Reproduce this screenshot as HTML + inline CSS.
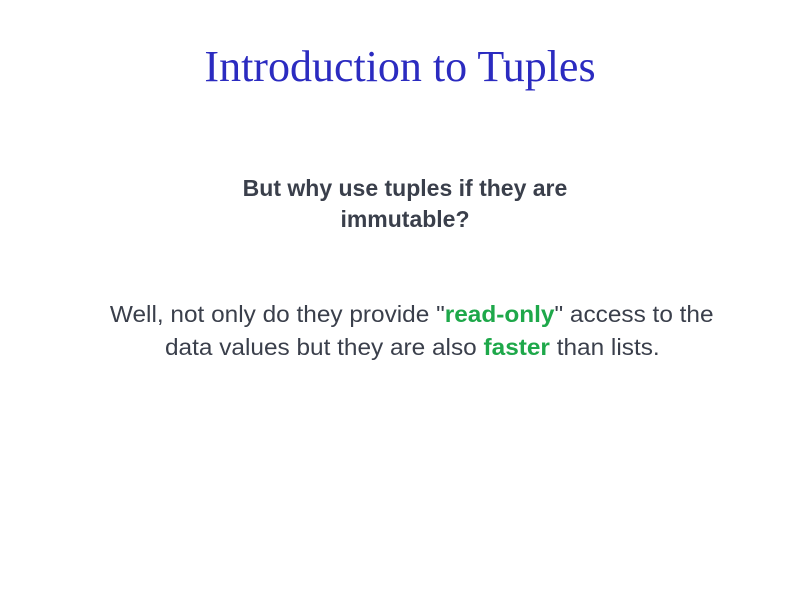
<!DOCTYPE html>
<html><head><style>
body{margin:0;width:800px;height:600px;background:#fff;position:relative;overflow:hidden}
.l{position:absolute;left:0;width:800px;text-align:center;white-space:nowrap}
.t{font-family:"Liberation Serif",serif;color:#2b2bc0;font-size:44px;top:41px}
.s{font-family:"Liberation Sans",sans-serif;color:#3a3f4b}
.s span{display:inline-block}
.g{color:#1ea84a;font-weight:bold}
</style></head><body>
<div class="l t">Introduction to Tuples</div>
<div class="l s" style="top:175px;font-size:23px;font-weight:bold;left:5px"><span>But why use tuples if they are</span></div>
<div class="l s" style="top:206px;font-size:23px;font-weight:bold;left:5px"><span>immutable?</span></div>
<div class="l s" style="top:301px;font-size:23px;left:12px"><span style="transform:scaleX(1.06)">Well, not only do they provide "<b class="g">read-only</b>" access to the</span></div>
<div class="l s" style="top:334px;font-size:23px;left:12px"><span style="transform:scaleX(1.06)">data values but they are also <b class="g">faster</b> than lists.</span></div>
</body></html>
